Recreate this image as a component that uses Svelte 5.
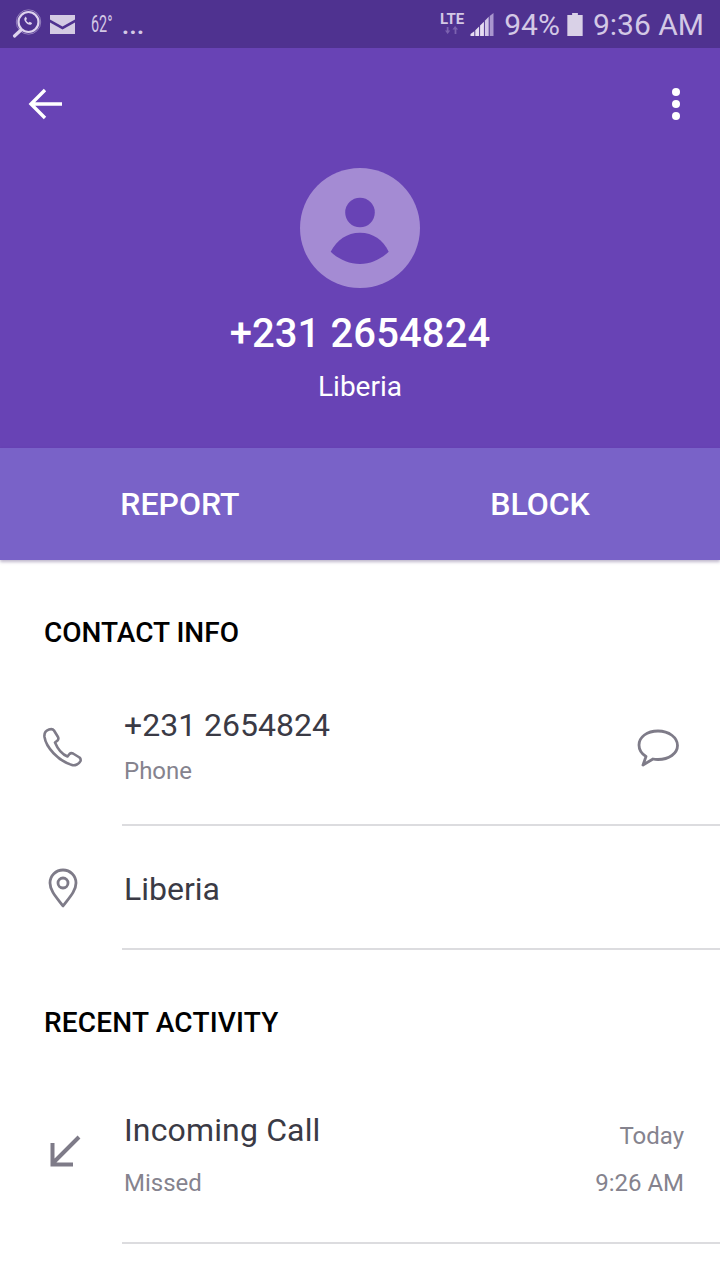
<script>
	const contact = [
		{ id: 'phone', title: '+231 2654824', sub: 'Phone' },
		{ id: 'pin', title: 'Liberia' }
	]
</script>

<div class="page">
	<div class="status">
		<div class="status-left">
			<svg class="ic-search" width="30" height="30" viewBox="0 0 30 30" fill="none" stroke="#ded3ee">
				<circle cx="16.5" cy="13" r="10" stroke-width="2.2" />
				<circle cx="16.5" cy="13" r="12.2" stroke-width="0.6" opacity="0.8" />
				<path d="M9 21 L2.500 27" stroke-width="3.200" stroke-linecap="round" />
				<path d="M13 8.500c-1 1-1 2.500 .3 4.300 1.200 1.700 2.800 3 4.700 3 1.200 0 2-.8 2-1.800l-2.300-1.300-1 1c-1.200-.5-2.200-1.600-2.700-2.800l1-1-1.200-2.300z" fill="#ded3ee" stroke="none" />
			</svg>
			<svg class="ic-mail" width="25" height="19" viewBox="0 0 25 19">
				<path d="M0 0H25V4.500L12.500 11.500 0 4.500Z M0 7.500L12.500 14.500 25 7.500V19H0Z" fill="#d4cbe3" />
			</svg>
			<span class="temp">62°</span>
			<span class="dots">...</span>
		</div>
		<div class="status-right">
			<div class="lte">
				<span>LTE</span>
				<svg width="14" height="8" viewBox="0 0 16 9" fill="#7c62b0">
					<path d="M3 9 0 5h2V1h2v4h2z M11.500 0 15 4h-2v5h-2V4H8.500z" />
				</svg>
			</div>
			<svg class="signal" width="24" height="23" viewBox="0 0 24 24">
				<path d="M0 24v-2l4-3v5z M5 24v-6l4-4v10z" fill="#e6def2" />
				<path d="M10 24V13l4-4v15z" fill="#e6def2" />
				<path d="M15 24V8l4-4v20z" fill="#d3c7e8" />
				<path d="M20 24V3l4-3v24z" fill="#a996cf" />
			</svg>
			<span class="pct">94%</span>
			<svg class="batt" width="16" height="23" viewBox="0 0 16 24">
				<path d="M5 0h6v2h5v22H0V2h5z" fill="#d9d1e7" />
			</svg>
			<span class="clock">9:36 AM</span>
		</div>
	</div>

	<header>
		<div class="toolbar">
			<svg width="36" height="34" viewBox="0 0 36 34" fill="none" stroke="#fff" stroke-width="3.400">
				<path d="M34 17H4 M17 3 3 17 17 31" />
			</svg>
			<div class="more"><i></i><i></i><i></i></div>
		</div>
		<svg class="avatar" width="120" height="120" viewBox="0 0 120 120">
			<circle cx="60" cy="60" r="60" fill="#a48bd3" />
			<circle cx="60" cy="44.500" r="14.800" fill="#6843b5" />
			<path d="M30.700 83.700C37 72 47 64.700 60 64.700S83 72 88.700 83.700C81 91 71 96 60 96S38 91 30.700 83.700Z" fill="#6843b5" />
		</svg>
		<h1>+231 2654824</h1>
		<p>Liberia</p>
	</header>

	<div class="actions">
		<span>REPORT</span>
		<span>BLOCK</span>
	</div>

	<main>
		<h2 class="first">CONTACT INFO</h2>
		{#each contact as row}
			<div class="row" class:tall={row.sub}>
				<div class="lead">
					{#if row.id === 'phone'}
						<svg width="40" height="40" viewBox="0 0 40 40" fill="none" stroke="#7e7b88" stroke-width="2.600" stroke-linejoin="round">
							<path d="M7 2.500C4 3.500 2 6 2.500 10 4 20 16 34 30 38c3 1 7-1 8.500-4 .5-1.500 0-2.500-1-3.500l-6.500-4c-1.500-.7-2.500-.5-3.500.5l-2 2.500c-5-2-10-8-12.500-14l2.500-2c1-1 1.200-2 .5-3.500L12 3.500C11 2 9 1.800 7 2.500Z" />
						</svg>
					{:else}
						<svg class="pin" width="30" height="40" viewBox="0 0 30 40" fill="none" stroke="#7e7b88" stroke-width="2.800">
							<path d="M15 38C9 30 2 23 2 15a13 13 0 0 1 26 0C28 23 21 30 15 38Z" stroke-linejoin="round" />
							<circle cx="15" cy="15" r="5" />
						</svg>
					{/if}
				</div>
				<div class="body">
					<div class="title">{row.title}</div>
					{#if row.sub}<div class="sub">{row.sub}</div>{/if}
				</div>
				{#if row.id === 'phone'}
					<svg class="chat" width="42" height="38" viewBox="0 0 42 38" fill="none" stroke="#7e7b88" stroke-width="2.800" stroke-linejoin="round">
						<path d="M21 2C10 2 2 8 2 16c0 5 3 9 7 11.500L6 36l10-6c2 .5 3 .5 5 .5 11 0 19.500-6 19.500-14S32 2 21 2Z" />
					</svg>
				{/if}
			</div>
		{/each}

		<h2 class="second">RECENT ACTIVITY</h2>
		<div class="row activity">
			<div class="lead">
				<svg width="32" height="32" viewBox="0 0 32 32" fill="none" stroke="#7e7b88" stroke-width="4">
					<path d="M29 2 4 27 M2.500 8V29.500H23" />
				</svg>
			</div>
			<div class="body">
				<div class="title">Incoming Call</div>
				<div class="sub">Missed</div>
			</div>
			<div class="when">
				<span>Today</span>
				<span>9:26 AM</span>
			</div>
		</div>
	</main>
</div>

<style>
	:global(body) {
		margin: 0;
		background: #fff;
	}

	.page {
		width: 720px;
		height: 1280px;
		overflow: hidden;
		font-family: Roboto, "Liberation Sans", sans-serif;
	}

	.status {
		height: 48px;
		background: #4f3290;
		display: flex;
		justify-content: space-between;
		align-items: center;
		padding: 0 16px 0 12px;
		color: #d3c8e5;
	}

	.status-left, .status-right {
		display: flex;
		align-items: center;
	}

	.ic-mail {
		margin-left: 8px;
	}

	.temp {
		font-size: 24px;
		margin-left: 16px;
		width: 26px;
		display: inline-block;
		transform: scaleX(0.6);
		transform-origin: left center;
	}

	.dots {
		font-size: 24px;
		font-weight: 700;
		margin-left: 5px;
		letter-spacing: 0.5px;
		transform: translateY(2px);
	}

	.lte {
		display: flex;
		flex-direction: column;
		align-items: center;
		font-size: 15px;
		font-weight: 700;
		line-height: 14px;
		margin-right: 6px;
		transform: translateY(-1px);
	}

	.pct, .clock {
		font-size: 30px;
	}

	.pct {
		margin-left: 10px;
	}

	.batt {
		margin: 0 10px 0 7px;
	}

	header {
		height: 400px;
		background: #6843b5;
		color: #fff;
		display: flex;
		flex-direction: column;
		align-items: center;
	}

	.toolbar {
		width: 100%;
		box-sizing: border-box;
		height: 120px;
		padding: 39px 40px 0 28px;
		display: flex;
		justify-content: space-between;
		align-items: flex-start;
	}

	.more {
		display: flex;
		flex-direction: column;
		gap: 4px;
		padding-top: 1px;
	}

	.more i {
		display: block;
		width: 8px;
		height: 8px;
		border-radius: 50%;
		background: #fff;
	}

	h1 {
		margin: 23px 0 0;
		font-size: 40px;
		font-weight: 500;
		line-height: 46px;
		letter-spacing: 0.1px;
	}

	header p {
		margin: 14px 0 0;
		font-size: 28px;
		line-height: 32px;
	}

	.actions {
		height: 112px;
		background: #7962c8;
		color: #fff;
		display: grid;
		grid-template-columns: 1fr 1fr;
		align-items: center;
		justify-items: center;
		font-size: 32px;
		font-weight: 500;
		box-shadow: 0 2px 3px rgba(70, 50, 110, 0.35);
		position: relative;
	}

	main {
		color: #3a3a45;
	}

	h2 {
		margin: 0;
		padding-left: 44px;
		font-size: 28px;
		font-weight: 500;
		line-height: 32px;
		color: #000;
	}

	.first {
		padding-top: 57px;
		padding-bottom: 24px;
	}

	.second {
		padding-top: 57px;
		padding-bottom: 33px;
		letter-spacing: 0.2px;
	}

	.row {
		display: flex;
		align-items: center;
		height: 124px;
		position: relative;
	}

	.row.tall {
		height: 153px;
	}

	.row::after {
		content: "";
		position: absolute;
		left: 122px;
		right: 0;
		bottom: 0;
		height: 2px;
		background: #dcdcdf;
	}

	.lead {
		width: 122px;
		padding-left: 2px;
		box-sizing: border-box;
		display: flex;
		justify-content: center;
		flex: none;
	}

	.pin {
		margin-left: 2px;
	}

	.tall .lead {
		padding-bottom: 6px;
	}

	.body {
		flex: 1;
		padding-left: 2px;
		padding-top: 2px;
	}

	.tall .body {
		padding-top: 0;
		padding-bottom: 7px;
	}

	.title {
		font-size: 32px;
		line-height: 38px;
	}

	.sub {
		font-size: 24px;
		line-height: 30px;
		margin-top: 12px;
		color: #85838e;
	}

	.chat {
		margin-right: 41px;
		margin-bottom: 4px;
	}

	.activity {
		height: 172px;
	}

	.activity .lead {
		padding-left: 10px;
		padding-bottom: 14px;
	}

	.activity .body {
		padding-top: 0;
		padding-bottom: 8px;
	}

	.activity .title {
		letter-spacing: 0.15px;
	}

	.activity .sub {
		margin-top: 19px;
	}

	.when {
		display: flex;
		flex-direction: column;
		align-items: flex-end;
		gap: 17px;
		padding-top: 3px;
		padding-right: 36px;
		font-size: 24px;
		line-height: 30px;
		color: #85838e;
	}
</style>
